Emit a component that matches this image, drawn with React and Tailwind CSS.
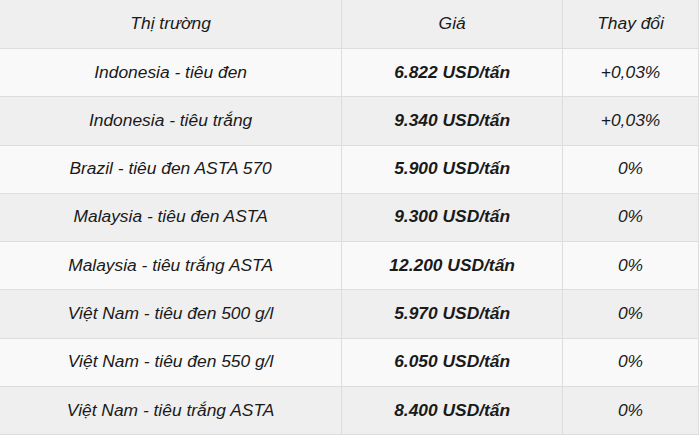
import React from "react";

const rows = [
  ["Indonesia - tiêu đen", "6.822 USD/tấn", "+0,03%"],
  ["Indonesia - tiêu trắng", "9.340 USD/tấn", "+0,03%"],
  ["Brazil - tiêu đen ASTA 570", "5.900 USD/tấn", "0%"],
  ["Malaysia - tiêu đen ASTA", "9.300 USD/tấn", "0%"],
  ["Malaysia - tiêu trắng ASTA", "12.200 USD/tấn", "0%"],
  ["Việt Nam - tiêu đen 500 g/l", "5.970 USD/tấn", "0%"],
  ["Việt Nam - tiêu đen 550 g/l", "6.050 USD/tấn", "0%"],
  ["Việt Nam - tiêu trắng ASTA", "8.400 USD/tấn", "0%"],
];

export default function App() {
  return (
    <div className="w-[700px] h-[436px] bg-white overflow-hidden" style={{ fontFamily: '"Liberation Sans", Arial, sans-serif' }}>
      <table className="w-[699px] border-collapse italic text-[17.4px] text-[#1a1a1a]">
        <colgroup>
          <col className="w-[342px]" />
          <col className="w-[221px]" />
          <col className="w-[136px]" />
        </colgroup>
        <thead>
          <tr className="bg-[#efefef] h-[48.5px]">
            <th className="border border-[#dddddd] border-t-0 border-l-0 font-normal text-center pb-[2px]">Thị trường</th>
            <th className="border border-[#dddddd] border-t-0 font-normal text-center pb-[2px]">Giá</th>
            <th className="border border-[#dddddd] border-t-0 font-normal text-center pb-[2px]">Thay đổi</th>
          </tr>
        </thead>
        <tbody>
          {rows.map((r, i) => (
            <tr key={i} className={i % 2 === 0 ? "bg-[#f9f9f9] h-[48.3px]" : "bg-[#efefef] h-[48.3px]"}>
              <td className="border border-[#dddddd] border-l-0 text-center pb-[2px]">{r[0]}</td>
              <td className="border border-[#dddddd] text-center font-bold pb-[2px]">{r[1]}</td>
              <td className="border border-[#dddddd] text-center pb-[2px]">{r[2]}</td>
            </tr>
          ))}
        </tbody>
      </table>
    </div>
  );
}
